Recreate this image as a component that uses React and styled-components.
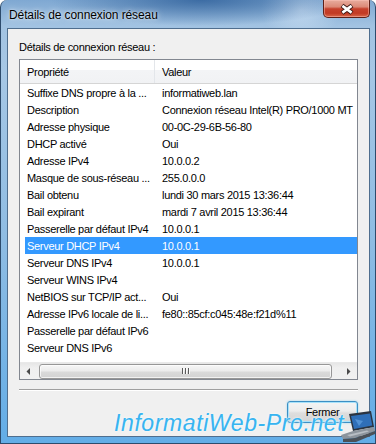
import React from 'react';
import styled, { createGlobalStyle } from 'styled-components';

const Global = createGlobalStyle`
  html, body { margin: 0; padding: 0; background: #fff; }
  body {
    width: 376px; height: 444px; overflow: hidden;
    font-family: "Liberation Sans", Arial, sans-serif;
  }
`;

const Window = styled.div`
  position: relative;
  width: 376px;
  height: 444px;
  box-sizing: border-box;
  display: flex;
  flex-direction: column;
  padding: 0 5px 6px 6px;
  border: 1px solid #2d4b6c;
  border-top: none;
  border-radius: 7px 7px 0 0;
  overflow: hidden;
  background:
    radial-gradient(ellipse 150px 26px at 200px 0px, rgba(38, 88, 148, 0.75), rgba(38, 88, 148, 0) 100%),
    radial-gradient(ellipse 40px 30px at 300px 10px, rgba(220, 235, 250, 0.6), rgba(220, 235, 250, 0) 100%),
    linear-gradient(180deg, #7fa8d2 0px, #a2c3e2 26px, #a6c7e5 70px, #8ebce3 55%, #63ade7 100%);
`;

const TitleBar = styled.div`
  height: 28px;
  display: flex;
  align-items: flex-start;
  justify-content: space-between;
  flex: none;
`;

const TitleText = styled.div`
  padding: 7px 0 0 2px;
  font-size: 12px;
  line-height: 16px;
  letter-spacing: -0.1px;
  color: #000;
  text-shadow: 0 0 6px rgba(255, 255, 255, 0.9), 0 0 2px rgba(255, 255, 255, 0.7);
  white-space: nowrap;
`;

const CloseButton = styled.div`
  width: 47px;
  height: 18px;
  box-sizing: border-box;
  border: 1px solid #5e2018;
  border-top: none;
  border-radius: 0 0 5px 5px;
  background: linear-gradient(180deg, #e8ad9e 0%, #dc8a78 40%, #c6412c 52%, #c23a24 78%, #d9684a 100%);
  box-shadow: inset 0 0 0 1px rgba(255, 200, 190, 0.45);
  display: flex;
`;

const Client = styled.div`
  flex: 1;
  box-sizing: border-box;
  border: 1px solid #4f6e8e;
  background: #f0f0f0;
  padding: 11px 11px 13px 11px;
  display: flex;
  flex-direction: column;
`;

const Label = styled.div`
  font-size: 11px;
  line-height: 14px;
  height: 14px;
  letter-spacing: -0.3px;
  color: #000;
  white-space: nowrap;
`;

const List = styled.div`
  margin-top: 5px;
  height: 321px;
  box-sizing: border-box;
  border: 1px solid #828790;
  background: #fff;
  display: flex;
  flex-direction: column;
  overflow: hidden;
`;

const Header = styled.div`
  height: 24px;
  flex: none;
  box-sizing: border-box;
  display: flex;
  border-bottom: 1px solid #d5d5d5;
  background: linear-gradient(180deg, #ffffff 0%, #ffffff 45%, #f3f4f6 45%, #f1f2f4 100%);
`;

const HeaderCell = styled.div`
  width: ${p => (p.$width ? `${p.$width}px` : 'auto')};
  flex: ${p => (p.$width ? 'none' : '1')};
  box-sizing: border-box;
  padding: 2px 0 0 7px;
  line-height: 21px;
  font-size: 11px;
  letter-spacing: -0.3px;
  color: #000;
  border-right: ${p => (p.$divider ? '1px solid #e3e6ea' : 'none')};
  white-space: nowrap;
`;

const Rows = styled.div`
  flex: 1;
  display: flex;
  flex-direction: column;
`;

const Row = styled.div`
  height: 17px;
  margin-left: 5px;
  display: grid;
  grid-template-columns: 130px 1fr;
  background: ${p => (p.$selected ? '#3399ff' : 'transparent')};
  color: ${p => (p.$selected ? '#fff' : '#000')};
`;

const Cell = styled.div`
  padding: 1px 0 0 ${p => p.$pad}px;
  line-height: 16px;
  font-size: 11px;
  letter-spacing: -0.3px;
  white-space: nowrap;
  overflow: hidden;
`;

const ScrollBar = styled.div`
  height: 17px;
  flex: none;
  display: flex;
  background: linear-gradient(180deg, #e6e6e6 0%, #efefef 30%, #f1f1f1 100%);
  border-top: 1px solid #e9e9e9;
  box-sizing: border-box;
`;

const ScrollArrow = styled.div`
  width: 17px;
  flex: none;
  display: flex;
  align-items: center;
  justify-content: center;
`;

const Track = styled.div`
  flex: 1;
  display: flex;
  align-items: center;
`;

const Thumb = styled.div`
  margin-left: 2px;
  width: 293px;
  height: 15px;
  box-sizing: border-box;
  border: 1px solid #979797;
  border-radius: 3px;
  background: linear-gradient(180deg, #f6f6f6 0%, #ececec 45%, #dadada 55%, #d2d2d2 100%);
  box-shadow: inset 0 0 0 1px rgba(255, 255, 255, 0.7);
  display: flex;
  align-items: center;
  justify-content: center;
  gap: 2px;
`;

const Grip = styled.span`
  width: 1px;
  height: 6px;
  background: #5a5a5a;
  box-shadow: 1px 0 0 #fafafa;
`;

const Separator = styled.div`
  margin-top: 9px;
  border-top: 1px solid #a0a0a0;
  border-bottom: 1px solid #ffffff;
`;

const ButtonRow = styled.div`
  margin-top: 10px;
  display: flex;
  justify-content: flex-end;
`;

const Button = styled.button`
  width: 71px;
  height: 22px;
  box-sizing: border-box;
  padding: 0;
  border: 1px solid #3c8fc4;
  border-radius: 3px;
  background: linear-gradient(180deg, #f4f4f4 0%, #ececec 45%, #dedede 55%, #d3d3d3 100%);
  box-shadow: inset 0 0 0 1px #a8e2fa, 0 0 2px rgba(80, 190, 240, 0.6);
  font-family: "Liberation Sans", Arial, sans-serif;
  font-size: 11px;
  letter-spacing: -0.3px;
  color: #000;
`;

const Watermark = styled.div`
  position: absolute;
  left: 113px;
  top: 412px;
  font-family: "Liberation Sans", Arial, sans-serif;
  font-style: italic;
  font-size: 23px;
  line-height: 23px;
  letter-spacing: 0.6px;
  color: #38b4f0;
  text-shadow: 0 0 1px #e6f7ff, 0 0 3px rgba(255, 255, 255, 0.9);
  white-space: nowrap;
  pointer-events: none;
`;

const Laptop = styled.svg`
  position: absolute;
  right: 0;
  bottom: 0;
`;

const rows = [
  ['Suffixe DNS propre à la ...', 'informatiweb.lan'],
  ['Description', 'Connexion réseau Intel(R) PRO/1000 MT'],
  ['Adresse physique', '00-0C-29-6B-56-80'],
  ['DHCP activé', 'Oui'],
  ['Adresse IPv4', '10.0.0.2'],
  ['Masque de sous-réseau ...', '255.0.0.0'],
  ['Bail obtenu', 'lundi 30 mars 2015 13:36:44'],
  ['Bail expirant', 'mardi 7 avril 2015 13:36:44'],
  ['Passerelle par défaut IPv4', '10.0.0.1'],
  ['Serveur DHCP IPv4', '10.0.0.1', true],
  ['Serveur DNS IPv4', '10.0.0.1'],
  ['Serveur WINS IPv4', ''],
  ['NetBIOS sur TCP/IP act...', 'Oui'],
  ['Adresse IPv6 locale de li...', 'fe80::85cf:c045:48e:f21d%11'],
  ['Passerelle par défaut IPv6', ''],
  ['Serveur DNS IPv6', ''],
];

export default function App() {
  return (
    <>
      <Global />
      <Window>
        <TitleBar>
          <TitleText>Détails de connexion réseau</TitleText>
          <CloseButton>
            <svg width="45" height="17" viewBox="0 0 45 17">
              <path d="M18 5.5 L28 13 M28 5.5 L18 13" stroke="#3a1612" strokeWidth="4.6" fill="none" />
              <path d="M18.4 5.9 L27.6 12.6 M27.6 5.9 L18.4 12.6" stroke="#ffffff" strokeWidth="2.6" fill="none" />
            </svg>
          </CloseButton>
        </TitleBar>
        <Client>
          <Label>Détails de connexion réseau :</Label>
          <List>
            <Header>
              <HeaderCell $width={135} $divider>Propriété</HeaderCell>
              <HeaderCell>Valeur</HeaderCell>
            </Header>
            <Rows>
              {rows.map(([k, v, sel], i) => (
                <Row key={i} $selected={sel}>
                  <Cell $pad={2}>{k}</Cell>
                  <Cell $pad={7}>{v}</Cell>
                </Row>
              ))}
            </Rows>
            <ScrollBar>
              <ScrollArrow>
                <svg width="5" height="7" viewBox="0 0 5 7">
                  <path d="M4 0 L4 7 L0.5 3.5 Z" fill="#4a4a4a" />
                </svg>
              </ScrollArrow>
              <Track>
                <Thumb>
                  <Grip />
                  <Grip />
                  <Grip />
                </Thumb>
              </Track>
              <ScrollArrow>
                <svg width="5" height="7" viewBox="0 0 5 7">
                  <path d="M1 0 L1 7 L4.5 3.5 Z" fill="#4a4a4a" />
                </svg>
              </ScrollArrow>
            </ScrollBar>
          </List>
          <Separator />
          <ButtonRow>
            <Button>Fermer</Button>
          </ButtonRow>
        </Client>
        <Watermark>InformatiWeb-Pro.net</Watermark>
        <Laptop width="34" height="32" viewBox="0 0 34 32">
          <path d="M8 3 L30 0 L33 16 L12 20 Z" fill="#2b3440" />
          <path d="M10 5 L29 2.5 L31.3 14.6 L13 18 Z" fill="#2f6fb8" />
          <path d="M14 8 L22 10 L18 15 Z" fill="#5fa0e0" opacity="0.7" />
          <path d="M0 24 L12 20 L33 16 L34 20 L14 27 L2 28 Z" fill="#8c949c" />
          <path d="M2 28 L14 27 L34 20 L34 23 L15 31 L2 31 Z" fill="#4b5158" />
          <path d="M6 24 L26 19.5 L28 20.5 L9 25.5 Z" fill="#b8bec4" />
        </Laptop>
      </Window>
    </>
  );
}
